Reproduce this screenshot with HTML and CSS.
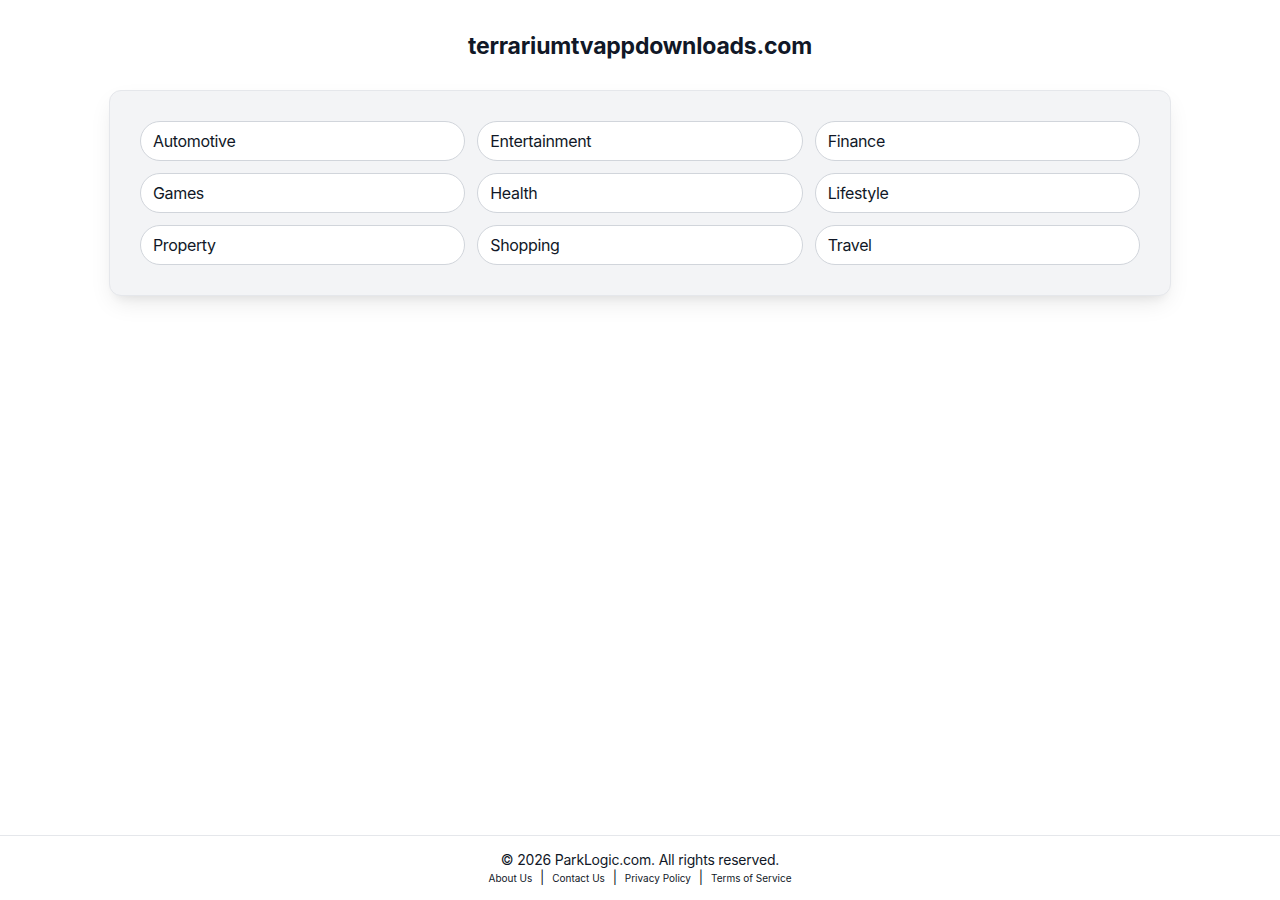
FILE: index.html
```html
<!DOCTYPE html>
<html>
  <head>
    <title>terrariumtvappdownloads.com</title>
    <link rel="stylesheet" href="styles.css">
  </head>
<body>
  <div class="page">
    <h1 class="title">terrariumtvappdownloads.com</h1>

    <div class="card">
      <a class="pill" href="#">Automotive</a>
      <a class="pill" href="#">Entertainment</a>
      <a class="pill" href="#">Finance</a>
      <a class="pill" href="#">Games</a>
      <a class="pill" href="#">Health</a>
      <a class="pill" href="#">Lifestyle</a>
      <a class="pill" href="#">Property</a>
      <a class="pill" href="#">Shopping</a>
      <a class="pill" href="#">Travel</a>
    </div>

    <footer class="footer">
      <p class="copyright">&copy; 2026 ParkLogic.com. All rights reserved.</p>
      <p class="links">
        <a href="#">About Us</a>
        <span class="sep">|</span>
        <a href="#">Contact Us</a>
        <span class="sep">|</span>
        <a href="#">Privacy Policy</a>
        <span class="sep">|</span>
        <a href="#">Terms of Service</a>
      </p>
    </footer>
  </div>
</body>
</html>
```

FILE: styles.css
```css
body{
  margin: 0;
  background-color: white;
  color: #111827;
  font-family: Inter, "Noto Sans", sans-serif;
}
.page{
  min-height: 100vh;
  display: flex;
  flex-direction: column;
  align-items: center;
}
.title{
  margin: 0;
  padding: 30px 0 28px;
  font-size: 23px;
  line-height: 32px;
  font-weight: 700;
  letter-spacing: -0.2px;
  color: #111827;
}
.card{
  box-sizing: border-box;
  width: 1062px;
  background-color: #f3f4f6;
  border: 1px solid #e5e7eb;
  border-radius: 12px;
  padding: 30px;
  display: grid;
  grid-template-columns: repeat(3, 1fr);
  gap: 12px;
  box-shadow: 0 10px 25px -5px rgba(0, 0, 0, 0.1), 0 8px 10px -6px rgba(0, 0, 0, 0.06);
}
.pill{
  box-sizing: border-box;
  height: 40px;
  display: flex;
  align-items: center;
  padding: 0 12px;
  background-color: white;
  border: 1px solid #d1d5db;
  border-radius: 9999px;
  color: #111827;
  font-size: 16px;
  letter-spacing: -0.35px;
  text-decoration: none;
}
.footer{
  margin-top: auto;
  align-self: stretch;
  border-top: 1px solid #e5e7eb;
  padding: 14px 0 15px;
  text-align: center;
}
.copyright{
  margin: 0;
  font-size: 14px;
  line-height: 20px;
  letter-spacing: -0.2px;
}
.links{
  margin: 0;
  font-size: 10px;
  line-height: 14px;
}
.links a{
  color: #111827;
  text-decoration: none;
}
.sep{
  font-size: 13px;
  margin: 0 5px;
}
```
